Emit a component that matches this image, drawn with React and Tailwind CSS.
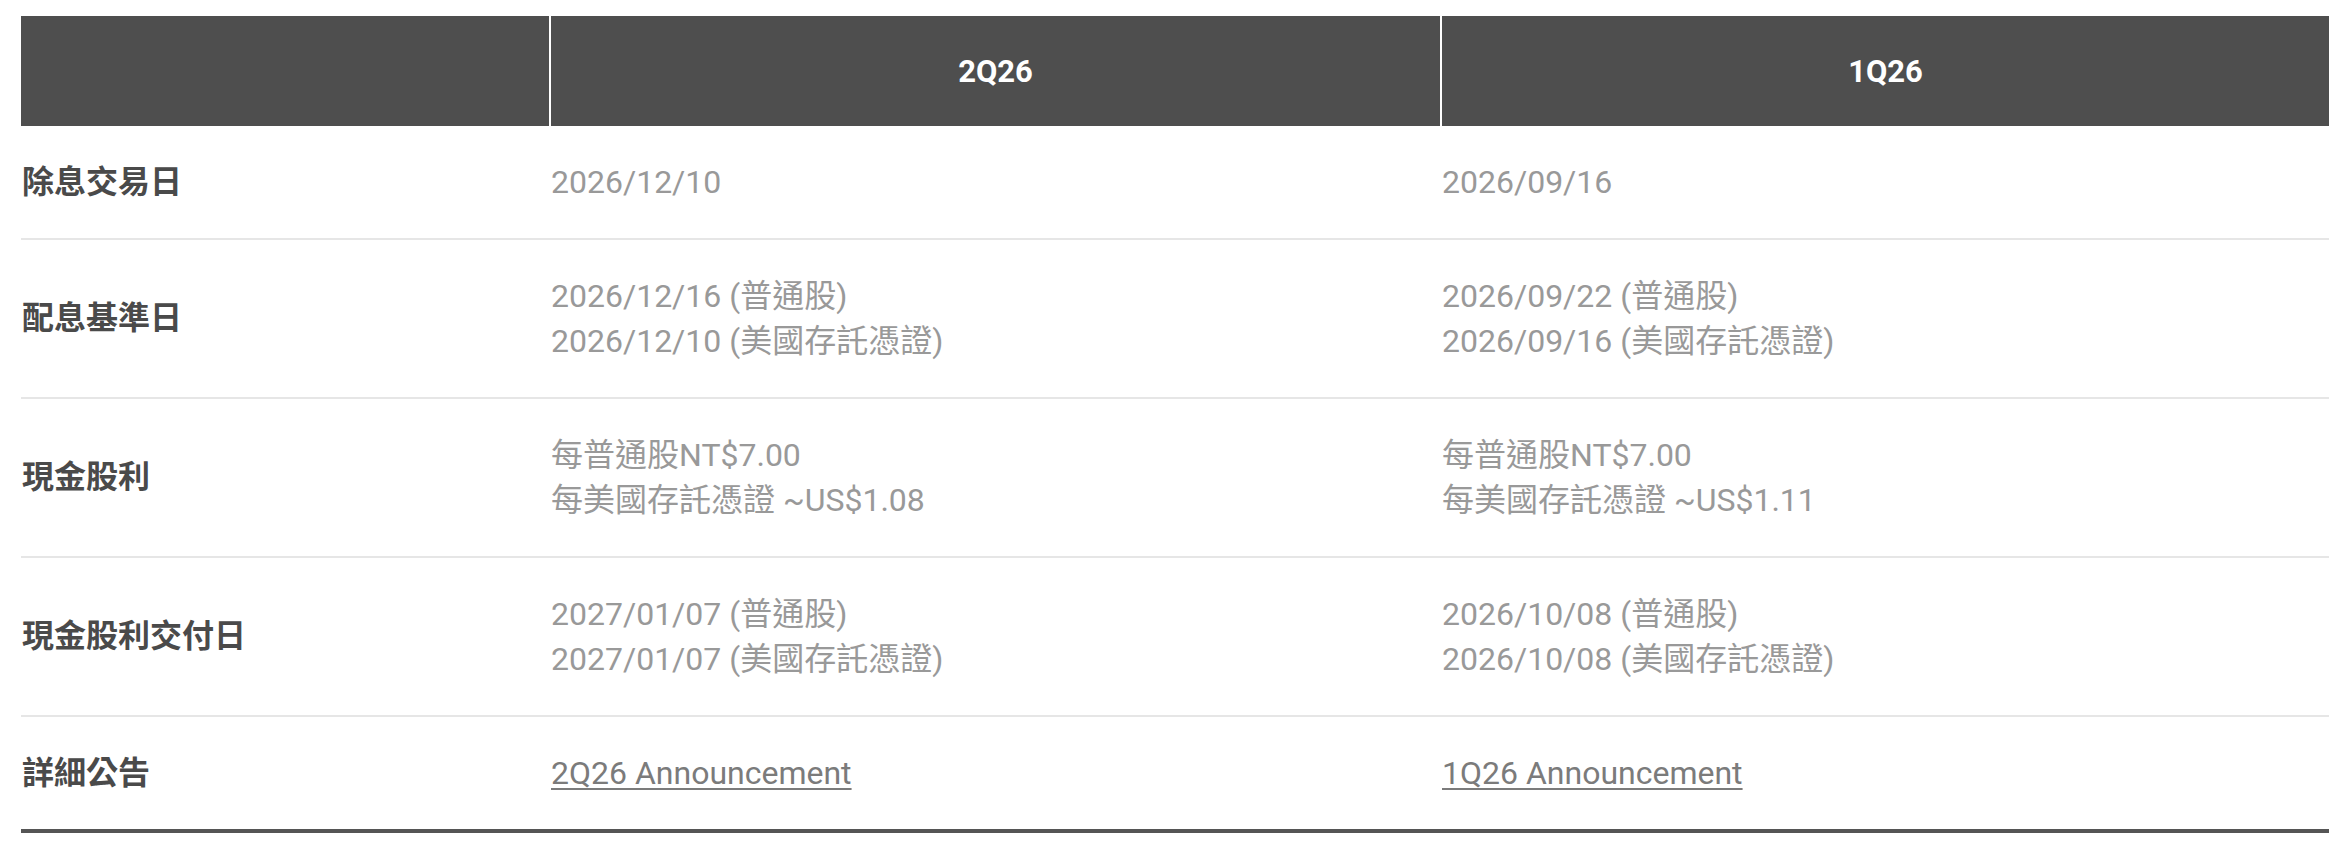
import React from "react";

const font = { fontFamily: 'Roboto, "Noto Sans CJK TC", "Noto Sans", sans-serif' };

const rows = [
  { label: "除息交易日", a: ["2026/12/10"], b: ["2026/09/16"] },
  {
    label: "配息基準日",
    a: ["2026/12/16 (普通股)", "2026/12/10 (美國存託憑證)"],
    b: ["2026/09/22 (普通股)", "2026/09/16 (美國存託憑證)"],
  },
  {
    label: "現金股利",
    a: ["每普通股NT$7.00", "每美國存託憑證 ~US$1.08"],
    b: ["每普通股NT$7.00", "每美國存託憑證 ~US$1.11"],
  },
  {
    label: "現金股利交付日",
    a: ["2027/01/07 (普通股)", "2027/01/07 (美國存託憑證)"],
    b: ["2026/10/08 (普通股)", "2026/10/08 (美國存託憑證)"],
  },
];

function Cell({ lines }) {
  return (
    <div className="pl-[2px] py-[33.5px] flex flex-col text-[#999999]">
      {lines.map((l, i) => (
        <span key={i}>{l}</span>
      ))}
    </div>
  );
}

export default function App() {
  return (
    <div className="w-[2352px] h-[852px] bg-white pt-[16px] px-[21px] text-[32px] leading-[45px]" style={font}>
      <div className="w-[2308px]">
        <div className="grid grid-cols-[528px_891px_889px] h-[110px] bg-[#4e4e4e] text-white font-bold text-[31px]">
          <div />
          <div className="border-l-2 border-white flex items-center justify-center">2Q26</div>
          <div className="border-l-2 border-white flex items-center justify-center">1Q26</div>
        </div>
        {rows.map((r) => (
          <div key={r.label} className="grid grid-cols-[528px_891px_889px] border-b-2 border-[#e6e6e6]">
            <div className="flex items-center font-bold text-[#4a4a4a] pl-[1px]">{r.label}</div>
            <Cell lines={r.a} />
            <Cell lines={r.b} />
          </div>
        ))}
        <div className="grid grid-cols-[528px_891px_889px] border-b-4 border-[#555555]">
          <div className="flex items-center font-bold text-[#4a4a4a] pl-[1px]">詳細公告</div>
          <div className="pl-[2px] py-[33.5px]">
            <a className="text-[#7b7b7b] underline decoration-2 underline-offset-[4px]">2Q26 Announcement</a>
          </div>
          <div className="pl-[2px] py-[33.5px]">
            <a className="text-[#7b7b7b] underline decoration-2 underline-offset-[4px]">1Q26 Announcement</a>
          </div>
        </div>
      </div>
    </div>
  );
}
